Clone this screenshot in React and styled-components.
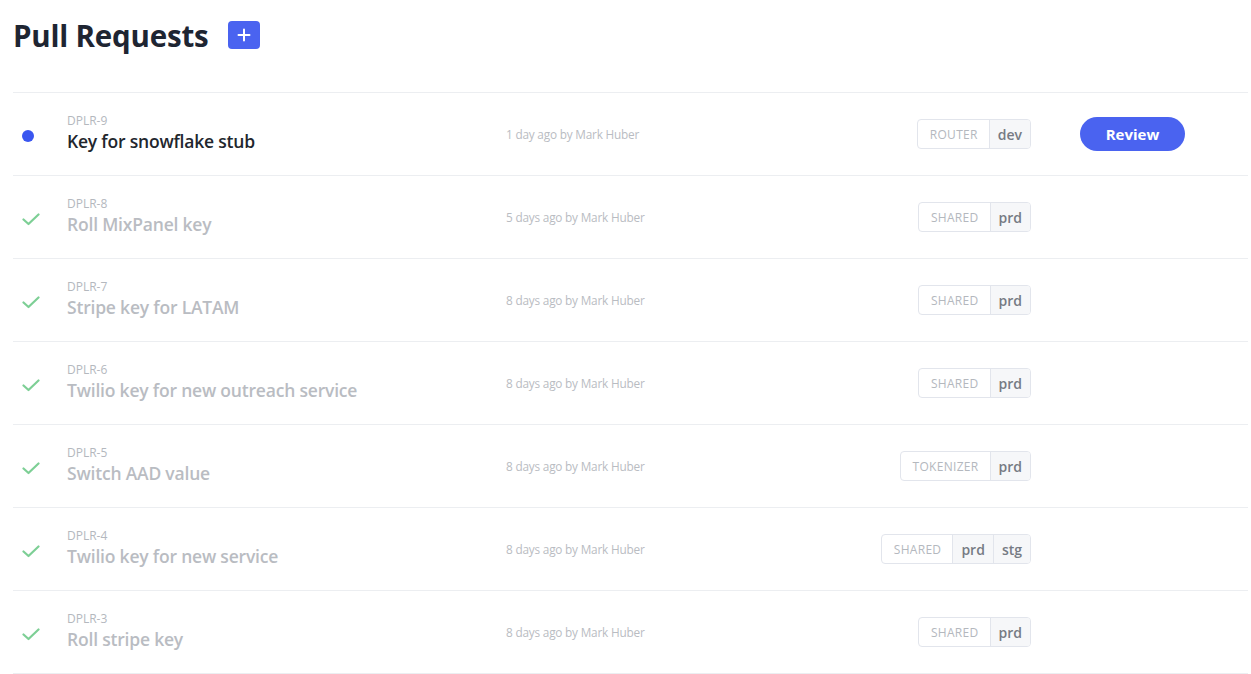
import React from "react";
import styled, { createGlobalStyle } from "styled-components";

const Global = createGlobalStyle`
  html, body { margin: 0; padding: 0; background: #fff; }
  body { font-family: "Open Sans", "Noto Sans", sans-serif; -webkit-font-smoothing: antialiased; }
  * { box-sizing: border-box; }
`;

const Page = styled.div`
  padding: 0 3px 0 13px;
`;

const Header = styled.div`
  display: flex;
  align-items: center;
  gap: 19px;
  height: 92px;
  padding-bottom: 22px;
`;

const Title = styled.h1`
  margin: 0;
  font-size: 29.5px;
  font-weight: 700;
  color: #1e2532;
  letter-spacing: -0.2px;
`;

const AddButton = styled.button`
  width: 32px;
  height: 28px;
  border: 0;
  border-radius: 4px;
  background: #4a63f0;
  color: #fff;
  display: flex;
  align-items: center;
  justify-content: center;
  padding: 0;
  cursor: pointer;
`;

const List = styled.div`
  border-top: 1px solid #eceef1;
`;

const Row = styled.div`
  display: grid;
  grid-template-columns: 54px 439px 1fr auto 217px;
  align-items: center;
  height: 83px;
  border-bottom: 1px solid #eceef1;
`;

const StatusCell = styled.div`
  display: flex;
  align-items: center;
  padding-left: 9px;
  margin-top: 4px;
`;

const Dot = styled.span`
  width: 12px;
  height: 12px;
  border-radius: 50%;
  background: #3a56f0;
`;

const TextCell = styled.div`
  display: flex;
  flex-direction: column;
  margin-top: -2px;
`;

const Id = styled.div`
  font-size: 12px;
  color: #b4b8be;
  line-height: 16px;
`;

const Name = styled.div`
  font-size: 17.5px;
  font-weight: 600;
  line-height: 24px;
  color: ${(p) => (p.$active ? "#22262d" : "#b9bcc2")};
  letter-spacing: -0.2px;
`;

const Meta = styled.div`
  font-size: 11.8px;
  color: #b9bcc2;
  margin-top: -1px;
  letter-spacing: -0.2px;
`;

const Tags = styled.div`
  display: flex;
  height: 30px;
  border: 1px solid #e2e5ec;
  border-radius: 4px;
  overflow: hidden;
  justify-self: end;
`;

const Scope = styled.span`
  display: flex;
  align-items: center;
  padding: 0 11px 0 12px;
  font-size: 12px;
  letter-spacing: 0.3px;
  color: #b4b8be;
  text-transform: uppercase;
`;

const Env = styled.span`
  display: flex;
  align-items: center;
  padding: 0 8px;
  font-size: 14px;
  font-weight: 600;
  color: #767b84;
  background: #f6f7f9;
  border-left: 1px solid #e2e5ec;
`;

const ActionCell = styled.div`
  padding-left: 49px;
`;

const ReviewButton = styled.button`
  width: 105px;
  height: 34px;
  border: 0;
  border-radius: 17px;
  background: #4a63f0;
  color: #fff;
  font-family: "Open Sans", sans-serif;
  font-weight: 700;
  font-size: 15px;
  cursor: pointer;
`;

const Check = () => (
  <svg width="18" height="13" viewBox="0 0 18 13" fill="none">
    <path d="M1.5 6.5 L6.5 11 L16.5 1.5" stroke="#7dcf95" strokeWidth="2.2" strokeLinecap="round" strokeLinejoin="round" />
  </svg>
);

const Plus = () => (
  <svg width="14" height="14" viewBox="0 0 14 14">
    <path d="M7 1.5 V12.5 M1.5 7 H12.5" stroke="#fff" strokeWidth="2" strokeLinecap="round" />
  </svg>
);

const rows = [
  { id: "DPLR-9", name: "Key for snowflake stub", meta: "1 day ago by Mark Huber", scope: "ROUTER", envs: ["dev"], active: true },
  { id: "DPLR-8", name: "Roll MixPanel key", meta: "5 days ago by Mark Huber", scope: "SHARED", envs: ["prd"] },
  { id: "DPLR-7", name: "Stripe key for LATAM", meta: "8 days ago by Mark Huber", scope: "SHARED", envs: ["prd"] },
  { id: "DPLR-6", name: "Twilio key for new outreach service", meta: "8 days ago by Mark Huber", scope: "SHARED", envs: ["prd"] },
  { id: "DPLR-5", name: "Switch AAD value", meta: "8 days ago by Mark Huber", scope: "TOKENIZER", envs: ["prd"] },
  { id: "DPLR-4", name: "Twilio key for new service", meta: "8 days ago by Mark Huber", scope: "SHARED", envs: ["prd", "stg"] },
  { id: "DPLR-3", name: "Roll stripe key", meta: "8 days ago by Mark Huber", scope: "SHARED", envs: ["prd"] },
];

export default function App() {
  return (
    <Page>
      <Global />
      <Header>
        <Title>Pull Requests</Title>
        <AddButton aria-label="New pull request"><Plus /></AddButton>
      </Header>
      <List>
        {rows.map((r) => (
          <Row key={r.id}>
            <StatusCell>{r.active ? <Dot /> : <Check />}</StatusCell>
            <TextCell>
              <Id>{r.id}</Id>
              <Name $active={r.active}>{r.name}</Name>
            </TextCell>
            <Meta>{r.meta}</Meta>
            <Tags>
              <Scope>{r.scope}</Scope>
              {r.envs.map((e) => (
                <Env key={e}>{e}</Env>
              ))}
            </Tags>
            <ActionCell>{r.active && <ReviewButton>Review</ReviewButton>}</ActionCell>
          </Row>
        ))}
      </List>
    </Page>
  );
}
